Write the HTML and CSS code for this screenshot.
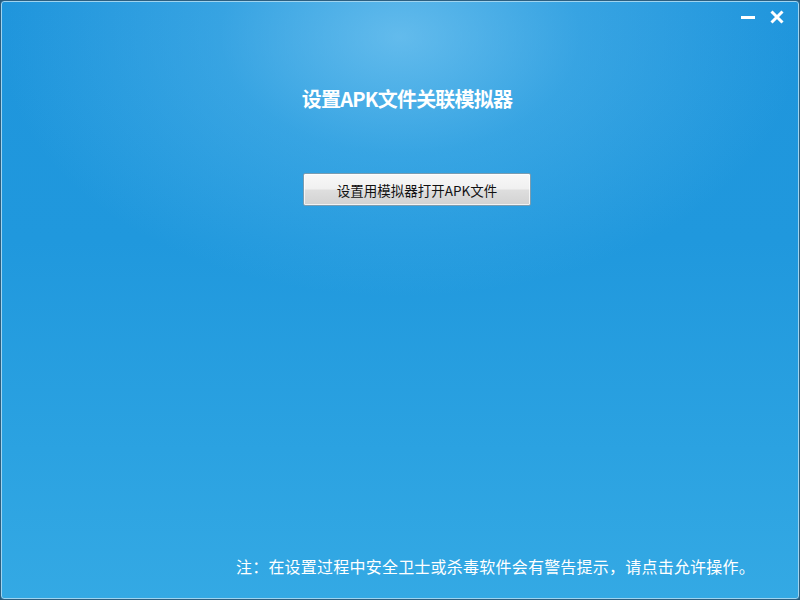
FILE: index.html
```html
<!DOCTYPE html>
<html lang="zh-CN">
<head>
<meta charset="utf-8">
<title>设置APK文件关联模拟器</title>
<link rel="stylesheet" href="styles.css">
</head>
<body>
<div class="window">
  <div class="titlebar">
    <button class="win-btn min" aria-label="最小化">
      <svg width="14" height="14" viewBox="0 0 14 14"><rect x="0" y="6" width="14" height="3" fill="#fff"/></svg>
    </button>
    <button class="win-btn close" aria-label="关闭">
      <svg width="16" height="16" viewBox="0 0 16 16"><path d="M2.5 2.5 L13.5 13.5 M13.5 2.5 L2.5 13.5" stroke="#fff" stroke-width="3" stroke-linecap="butt"/></svg>
    </button>
  </div>
  <main class="content">
    <h1 class="heading">设置APK文件关联模拟器</h1>
    <button class="action">设置用模拟器打开APK文件</button>
  </main>
  <footer class="note">注：在设置过程中安全卫士或杀毒软件会有警告提示，请点击允许操作。</footer>
</div>
</body>
</html>
```

FILE: styles.css
```css
html, body {
  margin: 0;
  padding: 0;
  width: 800px;
  height: 600px;
  overflow: hidden;
  background: #2a5a7a;
}

.window {
  box-sizing: border-box;
  width: 800px;
  height: 600px;
  border: 1px solid #2d5f80;
  border-radius: 4px;
  box-shadow: inset 0 0 0 1px #9fd4f0;
  background:
    radial-gradient(ellipse 400px 260px at 50% 6%, rgba(140, 210, 246, 0.62) 0%, rgba(100, 190, 238, 0.35) 45%, rgba(40, 155, 225, 0) 100%),
    linear-gradient(to bottom, #1f95dc 0%, #2098dd 40%, #2ba2e1 75%, #34a9e4 100%);
  display: flex;
  flex-direction: column;
  font-family: "Noto Sans CJK SC", "Liberation Sans", sans-serif;
}

.titlebar {
  display: flex;
  justify-content: flex-end;
  align-items: center;
  gap: 13px;
  height: 32px;
  padding-right: 14px;
}

.win-btn {
  border: 0;
  padding: 0;
  margin: 0;
  background: none;
  display: flex;
  align-items: center;
  justify-content: center;
  width: 16px;
  height: 16px;
}

.content {
  flex: 1;
  display: flex;
  flex-direction: column;
  align-items: center;
}

.heading {
  margin: 52px 0 0 14px;
  font-size: 20px;
  line-height: 28px;
  font-weight: bold;
  color: #fff;
  letter-spacing: -0.8px;
}

.action {
  margin: 60px 0 0 34px;
  width: 228px;
  height: 33px;
  border: 1px solid #7b9cb0;
  border-radius: 2px;
  background: linear-gradient(to bottom, #f8f8f8 0%, #f0f0f0 48%, #dedede 52%, #d2d2d2 100%);
  box-shadow: inset 0 0 0 1px rgba(255, 255, 255, 0.7);
  font-family: "Noto Sans CJK SC", "Liberation Sans", sans-serif;
  font-size: 13.5px;
  color: #111;
  padding: 0;
}

.note {
  padding: 0 44px 22px 0;
  text-align: right;
  font-size: 16px;
  line-height: 22px;
  letter-spacing: 0.22px;
  color: #fff;
}
```
